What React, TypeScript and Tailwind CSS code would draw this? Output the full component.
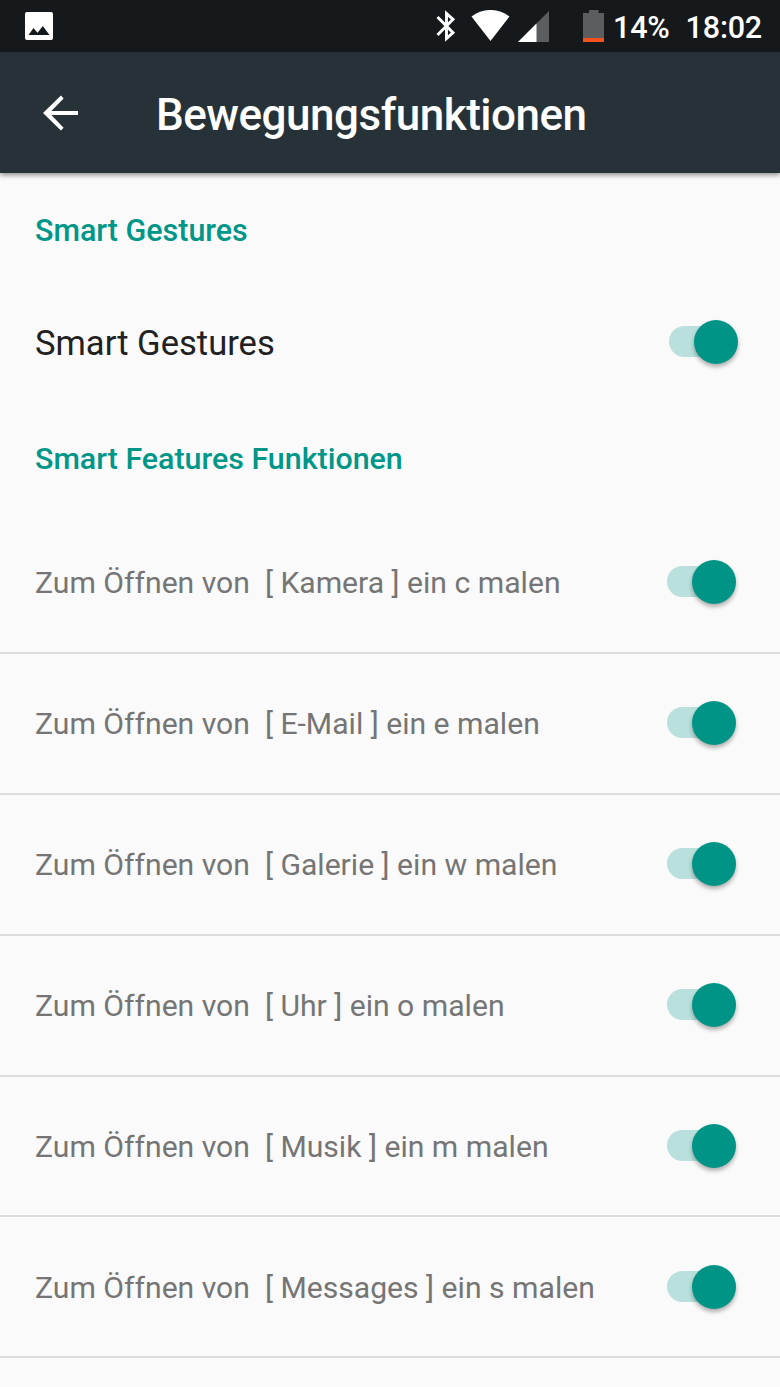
import React from 'react';

const gestures = [
  { app: 'Kamera', letter: 'c' },
  { app: 'E-Mail', letter: 'e' },
  { app: 'Galerie', letter: 'w' },
  { app: 'Uhr', letter: 'o' },
  { app: 'Musik', letter: 'm' },
  { app: 'Messages', letter: 's' },
];

const Toggle: React.FC = () => (
  <div className="relative h-[44px] w-[69px] shrink-0">
    <div className="absolute left-0 top-[6px] h-[31px] w-[60px] rounded-full bg-[#b9e0dc]" />
    <div className="absolute right-0 top-0 size-[44px] rounded-full bg-[#009486] shadow-[0_3px_4px_rgba(0,0,0,0.3)]" />
  </div>
);

const StatusBar: React.FC = () => (
  <div className="flex h-[52px] items-center bg-[#15191c] pl-[25px] pr-[18px] text-white">
    <svg width="28" height="28" viewBox="0 0 28 28">
      <path
        fill="#fff"
        fillRule="evenodd"
        d="M2 0h24a2 2 0 0 1 2 2v24a2 2 0 0 1-2 2H2a2 2 0 0 1-2-2V2a2 2 0 0 1 2-2zM8.500 16L3.500 23h21L17.800 14 12.500 20.700z"
      />
    </svg>
    <div className="ml-auto flex items-center">
      <svg width="20" height="32" viewBox="0 0 20 32" fill="none" stroke="#fff" strokeWidth="2.900">
        <path d="M1.500 7L17 22.700L10.500 28.500V3.500L17 9.300L1.500 25" />
      </svg>
      <svg className="ml-[15px]" width="40" height="32" viewBox="0 0 40 32">
        <path fill="#fff" d="M19.500 31L0.500 6.500C12-2.200 27-2.200 38.500 6.500z" />
      </svg>
      <svg className="ml-[7px]" width="31" height="31" viewBox="0 0 31 31">
        <path fill="#5b5d5f" d="M31 0v31H0z" />
        <path fill="#fff" d="M18.500 12.500V31H0z" />
      </svg>
      <svg className="ml-[34px]" width="21" height="32" viewBox="0 0 21 32">
        <path fill="#5b5d5f" d="M6 0h9.500v3H21v29H0V3h6z" />
        <path fill="#f4511e" d="M0 28h21v4H0z" />
      </svg>
      <span className="ml-[9px] pt-[3px] text-[30.500px] tracking-[-0.200px] font-medium">14%</span>
      <span className="ml-[16px] pt-[3px] text-[30.500px] tracking-[-0.200px] font-medium">18:02</span>
    </div>
  </div>
);

export default function App() {
  return (
    <div className="h-[1387px] overflow-hidden bg-[#fafafa] font-['Roboto',sans-serif] whitespace-pre">
      <StatusBar />
      <header className="relative flex h-[121px] items-center bg-[#263238] pl-[43px] text-white shadow-[0_2px_5px_rgba(0,0,0,0.45)]">
        <svg width="35" height="36" viewBox="4 4 16 16" fill="#fff">
          <path d="M20 11.100H7.830l5.590-5.690L12.200 4l-8.200 8 8.200 8 1.220-1.210L7.830 12.900H20v-1.800z" />
        </svg>
        <h1 className="ml-[78px] pt-[4px] text-[44px] font-medium tracking-[-0.490px]">Bewegungsfunktionen</h1>
      </header>

      <h2 className="flex h-[113px] items-center pl-[35px] pt-[2px] text-[30.450px] font-medium text-[#009688]">Smart Gestures</h2>
      <div className="flex h-[112px] items-center justify-between pl-[35px] pr-[42px]">
        <span className="pt-[3px] text-[34.600px] text-[#212121]">Smart Gestures</span>
        <Toggle />
      </div>
      <h2 className="flex h-[115px] items-center pl-[35px] pt-[7px] text-[30.400px] font-medium text-[#009688]">Smart Features Funktionen</h2>

      {gestures.map(({ app, letter }) => (
        <div key={app} className="flex h-[140.900px] items-center justify-between border-b-2 border-[#dcdcdc] pl-[35px] pr-[44px]">
          <span className="pt-[1px] text-[30.150px] text-[#757575]">{`Zum Öffnen von  [ ${app} ] ein ${letter} malen`}</span>
          <Toggle />
        </div>
      ))}
    </div>
  );
}
